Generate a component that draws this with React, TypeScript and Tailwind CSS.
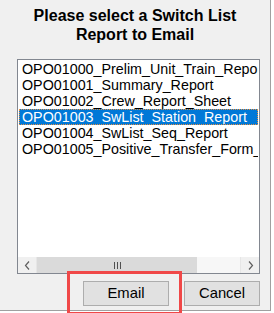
const reports = [
  "OPO01000_Prelim_Unit_Train_Reporting",
  "OPO01001_Summary_Report",
  "OPO01002_Crew_Report_Sheet",
  "OPO01003_SwList_Station_Report",
  "OPO01004_SwList_Seq_Report",
  "OPO01005_Positive_Transfer_Form_Report",
];

const selected = 3;

function Chevron({ dir }: { dir: "left" | "right" }) {
  return (
    <svg width="7" height="9" viewBox="0 0 7 9" fill="none">
      {dir === "left" ? (
        <path d="M5 0.5 L1.5 4.5 L5 8.5" stroke="#606060" strokeWidth="1.2" />
      ) : (
        <path d="M2 0.5 L5.5 4.5 L2 8.5" stroke="#606060" strokeWidth="1.2" />
      )}
    </svg>
  );
}

export default function App() {
  return (
    <div
      className="relative w-[274px] h-[313px] bg-white overflow-hidden"
      style={{ fontFamily: '"Liberation Sans", Arial, sans-serif' }}
    >
      <div className="w-[271px] h-[311px] bg-[#f0f0f0] border-r border-b border-[#a0a0a0] flex flex-col">
        {/* Title */}
        <div className="pt-[6px] text-center font-bold text-[16px] leading-[19px] text-black">
          Please select a Switch List
          <br />
          Report to Email
        </div>

        {/* List box */}
        <div className="mt-[15px] ml-[17px] w-[243px] h-[215px] border border-[#828790] bg-white flex flex-col">
          <div className="flex-1 overflow-hidden pt-[1px] pl-[1px] pr-[1px]">
            {reports.map((r, i) => (
              <div
                key={r}
                className={
                  i === selected
                    ? "h-[16px] leading-[15px] pl-[2px] whitespace-nowrap overflow-hidden text-[14.3px] text-white bg-[#0078d7] border border-dotted border-[#e89040]"
                    : "h-[16px] leading-[16px] pl-[3px] whitespace-nowrap overflow-hidden text-[14.3px] text-black"
                }
              >
                {r}
              </div>
            ))}
          </div>

          {/* Horizontal scrollbar */}
          <div className="h-[17px] flex bg-[#f0f0f0] border-t border-white">
            <div className="w-[19px] flex items-center justify-center border-r border-[#e6e6e6]">
              <Chevron dir="left" />
            </div>
            <div className="w-[160px] bg-[#dadada] flex items-center justify-center gap-[2px]">
              <div className="w-[1px] h-[7px] bg-[#505050]" />
              <div className="w-[1px] h-[7px] bg-[#505050]" />
              <div className="w-[1px] h-[7px] bg-[#505050]" />
            </div>
            <div className="flex-1 bg-[#f7f7f7]" />
            <div className="w-[19px] flex items-center justify-center border-l border-[#e6e6e6]">
              <Chevron dir="right" />
            </div>
          </div>
        </div>

        {/* Buttons */}
        <div className="mt-[7px] flex pl-[83px] gap-[15px]">
          <button className="w-[86px] h-[25px] border border-[#adadad] bg-[#e1e1e1] text-[14.8px] text-black">
            Email
          </button>
          <button className="w-[76px] h-[25px] border border-[#adadad] bg-[#e1e1e1] text-[14.8px] text-black">
            Cancel
          </button>
        </div>
      </div>

      {/* Red highlight annotation */}
      <div className="absolute left-[67px] top-[271px] w-[115px] h-[44px] border-[3px] border-[#f04848]" />
    </div>
  );
}
